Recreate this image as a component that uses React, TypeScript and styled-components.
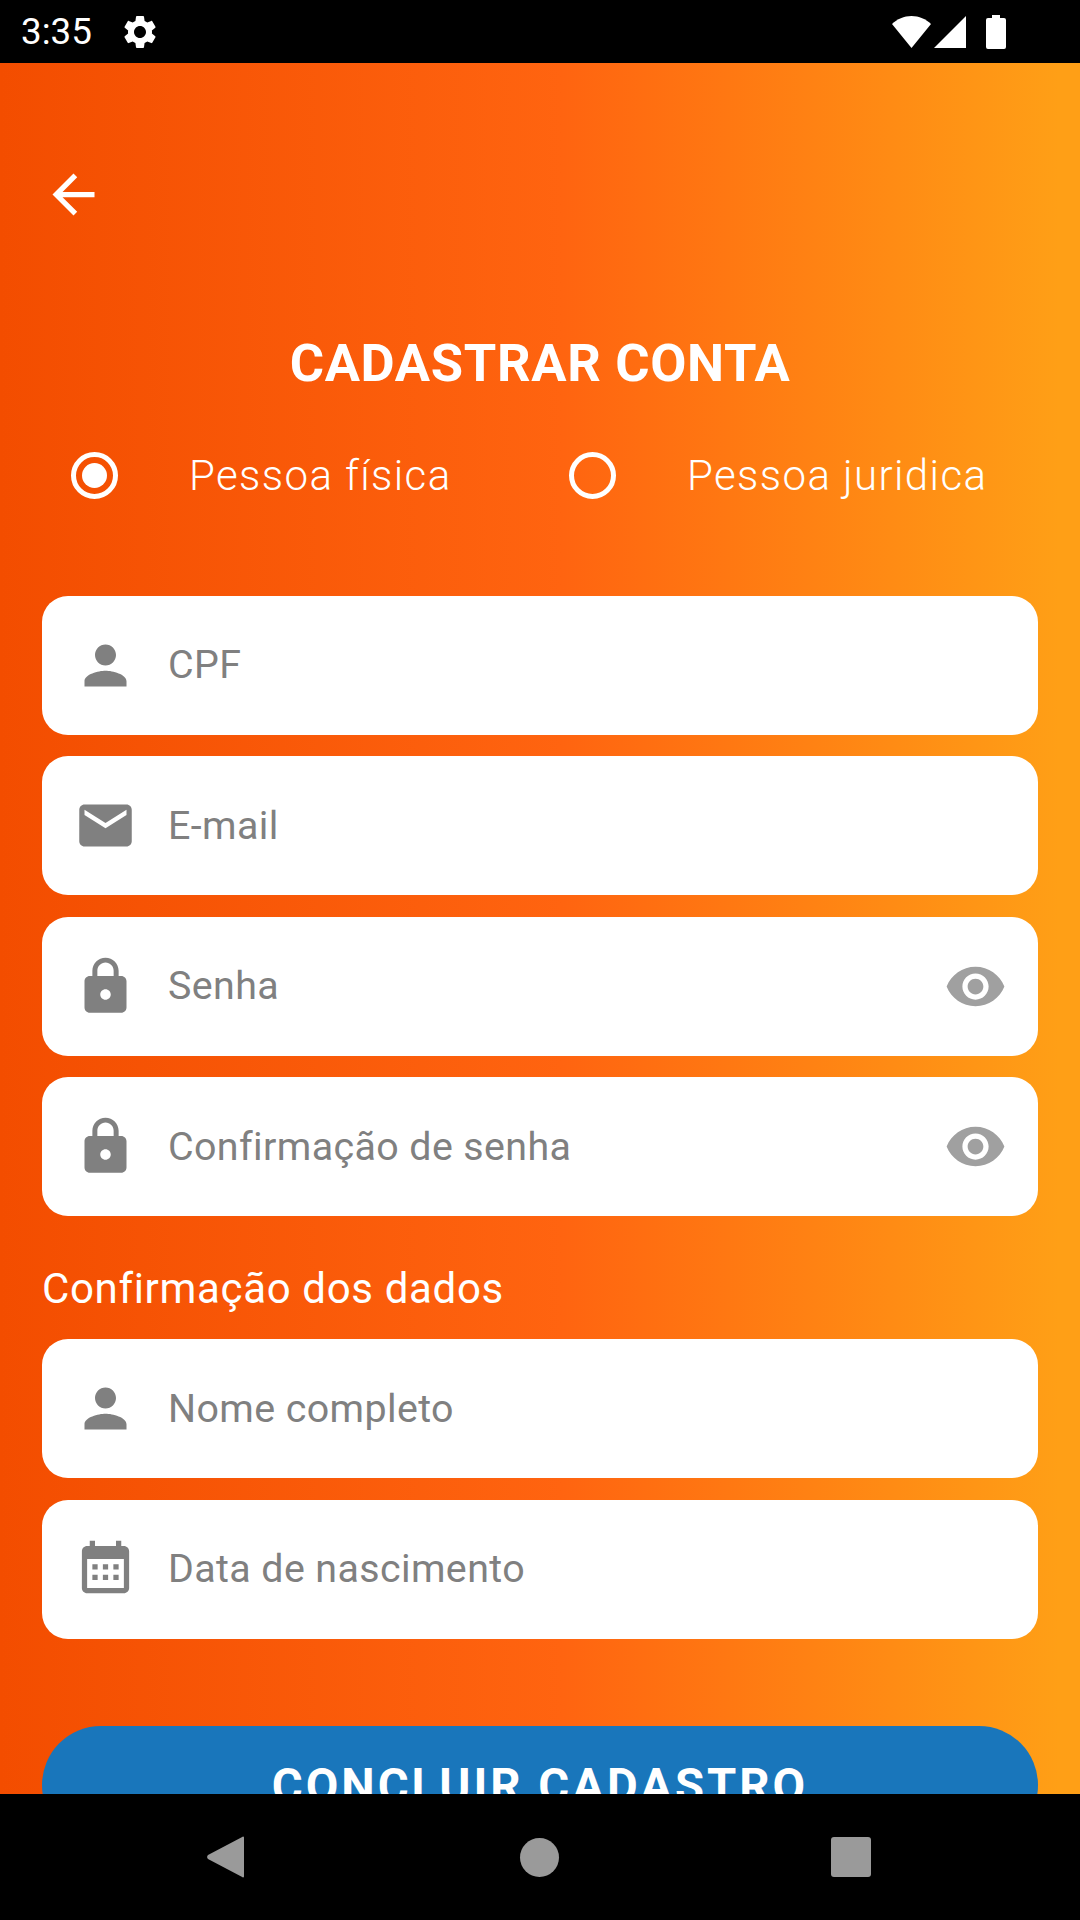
import React from 'react';
import styled, { createGlobalStyle } from 'styled-components';

const GlobalStyle = createGlobalStyle`
  html, body {
    margin: 0;
    padding: 0;
    background: #000;
    font-family: Roboto, "Liberation Sans", sans-serif;
  }
`;

// Material icon paths
const ICONS = {
  back: 'M20 11H7.83l5.59-5.59L12 4l-8 8 8 8 1.41-1.41L7.83 13H20v-2z',
  person: 'M12 12c2.21 0 4-1.79 4-4s-1.79-4-4-4-4 1.79-4 4 1.79 4 4 4zm0 2c-2.67 0-8 1.34-8 4v2h16v-2c0-2.66-5.33-4-8-4z',
  email: 'M20 4H4c-1.1 0-1.99.9-1.99 2L2 18c0 1.1.9 2 2 2h16c1.1 0 2-.9 2-2V6c0-1.1-.9-2-2-2zm0 4l-8 5-8-5V6l8 5 8-5v2z',
  lock: 'M18 8h-1V6c0-2.76-2.24-5-5-5S7 3.24 7 6v2H6c-1.1 0-2 .9-2 2v10c0 1.1.9 2 2 2h12c1.1 0 2-.9 2-2V10c0-1.1-.9-2-2-2zm-6 9c-1.1 0-2-.9-2-2s.9-2 2-2 2 .9 2 2-.9 2-2 2zm3.1-9H8.9V6c0-1.71 1.39-3.1 3.1-3.1 1.71 0 3.1 1.39 3.1 3.1v2z',
  eye: 'M12 4.5C7 4.5 2.73 7.61 1 12c1.73 4.39 6 7.5 11 7.5s9.27-3.11 11-7.5c-1.73-4.39-6-7.5-11-7.5zM12 17c-2.76 0-5-2.24-5-5s2.24-5 5-5 5 2.24 5 5-2.24 5-5 5zm0-8c-1.66 0-3 1.34-3 3s1.34 3 3 3 3-1.34 3-3-1.34-3-3-3z',
  calendar: 'M19 3h-1V1h-2v2H8V1H6v2H5c-1.11 0-1.99.9-1.99 2L3 19c0 1.1.89 2 2 2h14c1.1 0 2-.9 2-2V5c0-1.1-.9-2-2-2zm0 16H5V8h14v11zM9 10H7v2h2v-2zm4 0h-2v2h2v-2zm4 0h-2v2h2v-2zm-8 4H7v2h2v-2zm4 0h-2v2h2v-2zm4 0h-2v2h2v-2z',
  gear: 'M19.14 12.94c.04-.3.06-.61.06-.94 0-.32-.02-.64-.07-.94l2.03-1.58c.18-.14.23-.41.12-.61l-1.92-3.32c-.12-.22-.37-.29-.59-.22l-2.39.96c-.5-.38-1.03-.7-1.62-.94l-.36-2.54c-.04-.24-.24-.41-.48-.41h-3.84c-.24 0-.43.17-.47.41l-.36 2.54c-.59.24-1.13.57-1.62.94l-2.39-.96c-.22-.08-.47 0-.59.22L2.74 8.87c-.12.21-.08.47.12.61l2.03 1.58c-.05.3-.09.63-.09.94s.02.64.07.94l-2.03 1.58c-.18.14-.23.41-.12.61l1.92 3.32c.12.22.37.29.59.22l2.39-.96c.5.38 1.03.7 1.62.94l.36 2.54c.05.24.24.41.48.41h3.84c.24 0 .44-.17.47-.41l.36-2.54c.59-.24 1.13-.56 1.62-.94l2.39.96c.22.08.47 0 .59-.22l1.92-3.32c.12-.22.07-.47-.12-.61l-2.01-1.58zM12 15.6c-1.98 0-3.6-1.62-3.6-3.6s1.62-3.6 3.6-3.6 3.6 1.62 3.6 3.6-1.62 3.6-3.6 3.6z',
};

type IconName = keyof typeof ICONS;

const Screen = styled.div`
  width: 1080px;
  height: 1920px;
  display: flex;
  flex-direction: column;
  overflow: hidden;
  background: #000;
`;

const StatusBar = styled.div`
  flex: 0 0 63px;
  display: flex;
  align-items: center;
  padding: 0 74px 0 21px;
  color: #fff;
  background: #000;
`;

const Clock = styled.span`
  font-size: 36.75px;
  line-height: 63px;
  margin-right: 28px;
`;

const StatusRight = styled.div`
  margin-left: auto;
  display: flex;
  align-items: center;
`;

const StatusGlyph = styled.svg<{ $gap?: number }>`
  flex: none;
  fill: #fff;
  margin-left: ${props => props.$gap ?? 0}px;
`;

const Content = styled.div`
  flex: 0 0 1731px;
  box-sizing: border-box;
  overflow: hidden;
  padding: 99.5px 42px 0;
  background: linear-gradient(90deg, #f34d00 0%, #ff6410 52%, #ff9f16 98%);
`;

const BackButton = styled.button`
  display: block;
  width: 63px;
  height: 63px;
  padding: 0;
  border: 0;
  background: none;
  color: #fff;
`;

const Title = styled.h1`
  margin: 106px 0 0;
  height: 62px;
  font-size: 52.5px;
  line-height: 62px;
  font-weight: 700;
  letter-spacing: 0.66px;
  text-align: center;
  color: #fff;
`;

const RadioRow = styled.div`
  display: flex;
  height: 63px;
  margin-top: 50px;
`;

const RadioOption = styled.label`
  display: flex;
  align-items: center;
  flex: 0 0 498px;
  padding-left: 29px;
  box-sizing: border-box;
  color: #fff;
  font-size: 42px;
  font-weight: 300;
  letter-spacing: 1.4px;
  line-height: 61px;
`;

const RadioRing = styled.span<{ $checked?: boolean }>`
  position: relative;
  flex: none;
  width: 47px;
  height: 47px;
  margin-right: 71px;
  box-sizing: border-box;
  border: 5px solid #fff;
  border-radius: 50%;

  &::after {
    content: '';
    display: ${props => (props.$checked ? 'block' : 'none')};
    position: absolute;
    inset: 6px;
    border-radius: 50%;
    background: #fff;
  }
`;

const FieldGroup = styled.div<{ $top: number }>`
  display: flex;
  flex-direction: column;
  gap: 21.5px;
  margin-top: ${props => props.$top}px;
`;

const Field = styled.div`
  display: flex;
  align-items: center;
  height: 139px;
  padding: 0 31.5px;
  box-sizing: border-box;
  border-radius: 26px;
  background: #fff;
`;

const FieldIcon = styled.svg<{ $muted?: boolean }>`
  flex: none;
  width: 63px;
  height: 63px;
  fill: ${props => (props.$muted ? '#a0a0a0' : '#808080')};
`;

const Hint = styled.span`
  flex: 1;
  margin: -1px 0 0 31.5px;
  font-size: 39.375px;
  letter-spacing: 0.4px;
  color: #808080;
`;

const SectionLabel = styled.div`
  height: 50px;
  margin-top: 47px;
  font-size: 42px;
  line-height: 52px;
  letter-spacing: 0.66px;
  color: #fff;
`;

const SubmitButton = styled.button`
  display: block;
  width: 100%;
  height: 118px;
  margin-top: 87.5px;
  padding: 2px 0 0;
  border: 0;
  border-radius: 59px;
  background: #1976bb;
  color: #fff;
  font-family: inherit;
  font-size: 47.25px;
  font-weight: 700;
  letter-spacing: 3px;
`;

const NavBar = styled.div`
  flex: 0 0 126px;
  display: flex;
  align-items: center;
  justify-content: center;
  padding-right: 2px;
  background: #000;
`;

const NavCircle = styled.span`
  width: 39px;
  height: 39px;
  margin: 0 271.5px 0 276px;
  border-radius: 50%;
  background: #9a9a9a;
`;

const NavSquare = styled.span`
  width: 40px;
  height: 40px;
  border-radius: 3px;
  background: #9a9a9a;
`;

const Icon: React.FC<{ name: IconName; muted?: boolean }> = ({ name, muted }) => (
  <FieldIcon viewBox="0 0 24 24" $muted={muted}>
    <path d={ICONS[name]} />
  </FieldIcon>
);

const TextField: React.FC<{ icon: IconName; hint: string; secret?: boolean }> = ({ icon, hint, secret }) => (
  <Field>
    <Icon name={icon} />
    <Hint>{hint}</Hint>
    {secret && <Icon name="eye" muted />}
  </Field>
);

const App: React.FC = () => (
  <>
    <GlobalStyle />
    <Screen>
      <StatusBar>
        <Clock>3:35</Clock>
        <StatusGlyph width="40" height="40" viewBox="0 0 24 24">
          <path d={ICONS.gear} />
        </StatusGlyph>
        <StatusRight>
          <StatusGlyph width="39" height="32" viewBox="0 0 39 32">
            <path d="M0 8C5 3 12 0 19.5 0S34 3 39 8L19.5 32Z" />
          </StatusGlyph>
          <StatusGlyph width="32" height="32" viewBox="0 0 32 32" $gap={3}>
            <path d="M0 32H32V0Z" />
          </StatusGlyph>
          <StatusGlyph width="20" height="34" viewBox="0 0 20 34" $gap={20}>
            <path d="M6 0h8v3h4a2 2 0 0 1 2 2v27a2 2 0 0 1-2 2H2a2 2 0 0 1-2-2V5a2 2 0 0 1 2-2h4Z" />
          </StatusGlyph>
        </StatusRight>
      </StatusBar>

      <Content>
        <BackButton aria-label="Voltar">
          <svg width="63" height="63" viewBox="0 0 24 24" fill="currentColor">
            <path d={ICONS.back} />
          </svg>
        </BackButton>

        <Title>CADASTRAR CONTA</Title>

        <RadioRow>
          <RadioOption>
            <RadioRing $checked />
            Pessoa física
          </RadioOption>
          <RadioOption>
            <RadioRing />
            Pessoa juridica
          </RadioOption>
        </RadioRow>

        <FieldGroup $top={89}>
          <TextField icon="person" hint="CPF" />
          <TextField icon="email" hint="E-mail" />
          <TextField icon="lock" hint="Senha" secret />
          <TextField icon="lock" hint="Confirmação de senha" secret />
        </FieldGroup>

        <SectionLabel>Confirmação dos dados</SectionLabel>

        <FieldGroup $top={26}>
          <TextField icon="person" hint="Nome completo" />
          <TextField icon="calendar" hint="Data de nascimento" />
        </FieldGroup>

        <SubmitButton>CONCLUIR CADASTRO</SubmitButton>
      </Content>

      <NavBar>
        <svg width="37" height="42" viewBox="0 0 37 42" fill="#9a9a9a">
          <path d="M36 0.5a1 1 0 0 1 1 1v39a1 1 0 0 1-1.800 .6L1 23a3 3 0 0 1 0-4L35.200 0.900Z" />
        </svg>
        <NavCircle />
        <NavSquare />
      </NavBar>
    </Screen>
  </>
);

export default App;
